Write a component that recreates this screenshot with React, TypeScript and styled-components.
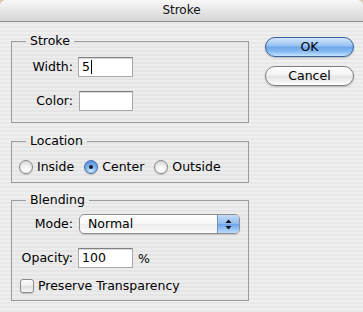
import React from "react";
import styled, { createGlobalStyle } from "styled-components";

const Global = createGlobalStyle`
  html, body { margin: 0; padding: 0; background: #d9ccb4; }
  body {
    font-family: "DejaVu Sans", "Liberation Sans", sans-serif;
    font-size: 12.5px;
    color: #000;
  }
`;

const Window = styled.div`
  width: 363px;
  height: 312px;
  overflow: hidden;
  border-radius: 6px 6px 0 0;
  background: repeating-linear-gradient(
    to bottom,
    #efefef 0px,
    #efefef 2px,
    #e8e8e8 2px,
    #e8e8e8 4px
  );
  display: flex;
  flex-direction: column;
`;

const TitleBar = styled.div`
  height: 21px;
  flex: none;
  border-bottom: 1px solid #8c8c8c;
  background: linear-gradient(to bottom, #f8f8f8, #e6e6e6 50%, #d6d6d6);
  display: flex;
  align-items: center;
  justify-content: center;
  font-size: 12px;
  line-height: 21px;
  color: #111;
`;

const Body = styled.div`
  display: flex;
  gap: 16px;
  padding: 11px 0 0 11px;
`;

const Column = styled.div`
  display: flex;
  flex-direction: column;
  width: 238px;
`;

const Group = styled.fieldset<{ $pt: number; $pb: number; $mt?: number; $gap?: number }>`
  margin: ${(p) => p.$mt ?? 0}px 0 0 0;
  padding: ${(p) => p.$pt}px 0 ${(p) => p.$pb}px 0;
  border: 1px solid #9b9b9b;
  box-sizing: border-box;
  width: 238px;
  min-width: 0;
  background: rgba(0, 0, 0, 0.012);
  display: flex;
  flex-direction: column;
  gap: ${(p) => p.$gap ?? 0}px;
`;

const Legend = styled.legend`
  margin-left: 14px;
  padding: 0 4px;
  line-height: 16px;
  font-size: 12.5px;
`;

const FieldRow = styled.div`
  display: grid;
  grid-template-columns: 61px auto;
  column-gap: 5px;
  align-items: center;
  justify-content: start;
`;

const Label = styled.span`
  text-align: right;
  white-space: nowrap;
  line-height: 16px;
`;

const InputWrap = styled.div`
  display: flex;
  align-items: center;
  gap: 5px;
`;

const TextField = styled.div<{ $w: number }>`
  width: ${(p) => p.$w}px;
  height: 20px;
  box-sizing: border-box;
  background: #fff;
  border: 1px solid #a8a8a8;
  border-top-color: #808080;
  box-shadow: inset 0 1px 0 #d8d8d8;
  display: flex;
  align-items: center;
  padding-left: 3px;
  line-height: 16px;
`;

const Caret = styled.span`
  display: inline-block;
  width: 1px;
  height: 14px;
  background: #000;
  margin-left: 1px;
`;

const RadioRow = styled.div`
  display: flex;
  align-items: center;
  gap: 10px;
  padding-left: 7px;
  height: 16px;
`;

const Option = styled.label`
  display: flex;
  align-items: center;
  gap: 4px;
  line-height: 16px;
`;

const RadioDot = styled.span<{ $on?: boolean }>`
  width: 14px;
  height: 14px;
  box-sizing: border-box;
  border-radius: 50%;
  display: flex;
  align-items: center;
  justify-content: center;
  border: 1px solid ${(p) => (p.$on ? "#4a6ea8" : "#8a8a8a")};
  background: ${(p) =>
    p.$on
      ? "radial-gradient(circle at 50% 80%, #cfe8ff 0%, #7fb5ef 45%, #3f7fd6 100%)"
      : "radial-gradient(circle at 50% 75%, #ffffff 0%, #f0f0f0 45%, #c9c9c9 100%)"};
  box-shadow: 0 1px 1px rgba(0, 0, 0, 0.2);
  &::after {
    content: "";
    display: ${(p) => (p.$on ? "block" : "none")};
    width: 4px;
    height: 4px;
    border-radius: 50%;
    background: #1a1a2a;
  }
`;

const CheckRow = styled.label`
  display: flex;
  align-items: center;
  gap: 4px;
  padding-left: 8px;
  height: 16px;
  line-height: 16px;
`;

const CheckBox = styled.span`
  width: 14px;
  height: 14px;
  box-sizing: border-box;
  border-radius: 3px;
  border: 1px solid #8a8a8a;
  background: linear-gradient(to bottom, #fdfdfd, #ececec 50%, #dedede 51%, #f6f6f6);
  box-shadow: 0 1px 1px rgba(0, 0, 0, 0.18);
`;

const Popup = styled.div`
  width: 161px;
  height: 20px;
  box-sizing: border-box;
  border: 1px solid #8e8e8e;
  border-radius: 5px;
  overflow: hidden;
  display: flex;
  background: linear-gradient(to bottom, #ffffff, #f7f7f7 50%, #ececec 51%, #fafafa);
  box-shadow: 0 1px 1px rgba(0, 0, 0, 0.15);
`;

const PopupText = styled.span`
  flex: 1;
  padding-left: 8px;
  line-height: 18px;
`;

const PopupArrows = styled.span`
  width: 21px;
  border-left: 1px solid #6d8fc4;
  background: linear-gradient(to bottom, #c6ddf7, #8fbaf0 50%, #6ea2ea 51%, #bcdcff);
  display: flex;
  align-items: center;
  justify-content: center;
`;

const Buttons = styled.div`
  display: flex;
  flex-direction: column;
  gap: 9px;
  margin-top: 4px;
`;

const Button = styled.button<{ $primary?: boolean }>`
  width: 89px;
  height: 20px;
  box-sizing: border-box;
  border-radius: 10px;
  font-family: inherit;
  font-size: 12.5px;
  line-height: 18px;
  padding: 0;
  color: #000;
  border: 1px solid ${(p) => (p.$primary ? "#3b5f9e" : "#7e7e7e")};
  background: ${(p) =>
    p.$primary
      ? "linear-gradient(to bottom, #d3e6fb 0%, #93c0f1 45%, #6ba5ea 50%, #86bbf2 75%, #c5e3ff 100%)"
      : "linear-gradient(to bottom, #ffffff 0%, #f3f3f3 45%, #e3e3e3 50%, #eeeeee 75%, #ffffff 100%)"};
  box-shadow: 0 1px 2px rgba(0, 0, 0, 0.22);
`;

export default function App() {
  return (
    <>
      <Global />
      <Window>
        <TitleBar>Stroke</TitleBar>
        <Body>
          <Column>
            <Group $pt={8} $pb={11} $gap={14}>
              <Legend>Stroke</Legend>
              <FieldRow>
                <Label>Width:</Label>
                <TextField $w={55}>
                  5<Caret />
                </TextField>
              </FieldRow>
              <FieldRow>
                <Label>Color:</Label>
                <TextField $w={54} style={{ marginLeft: 1 }} />
              </FieldRow>
            </Group>

            <Group $mt={10} $pt={10} $pb={7}>
              <Legend>Location</Legend>
              <RadioRow>
                <Option>
                  <RadioDot />
                  Inside
                </Option>
                <Option>
                  <RadioDot $on />
                  Center
                </Option>
                <Option>
                  <RadioDot />
                  Outside
                </Option>
              </RadioRow>
            </Group>

            <Group $mt={9} $pt={6} $pb={6}>
              <Legend>Blending</Legend>
              <FieldRow>
                <Label>Mode:</Label>
                <Popup style={{ marginLeft: 1 }}>
                  <PopupText>Normal</PopupText>
                  <PopupArrows>
                    <svg width="7" height="11" viewBox="0 0 7 11">
                      <path d="M3.5 0.5 L6.5 4 L0.5 4 Z" fill="#111" />
                      <path d="M3.5 10.5 L6.5 7 L0.5 7 Z" fill="#111" />
                    </svg>
                  </PopupArrows>
                </Popup>
              </FieldRow>
              <FieldRow style={{ marginTop: 14 }}>
                <Label>Opacity:</Label>
                <InputWrap>
                  <TextField $w={55}>100</TextField>
                  <span>%</span>
                </InputWrap>
              </FieldRow>
              <CheckRow style={{ marginTop: 10 }}>
                <CheckBox />
                Preserve Transparency
              </CheckRow>
            </Group>
          </Column>

          <Buttons>
            <Button $primary>OK</Button>
            <Button>Cancel</Button>
          </Buttons>
        </Body>
      </Window>
    </>
  );
}
